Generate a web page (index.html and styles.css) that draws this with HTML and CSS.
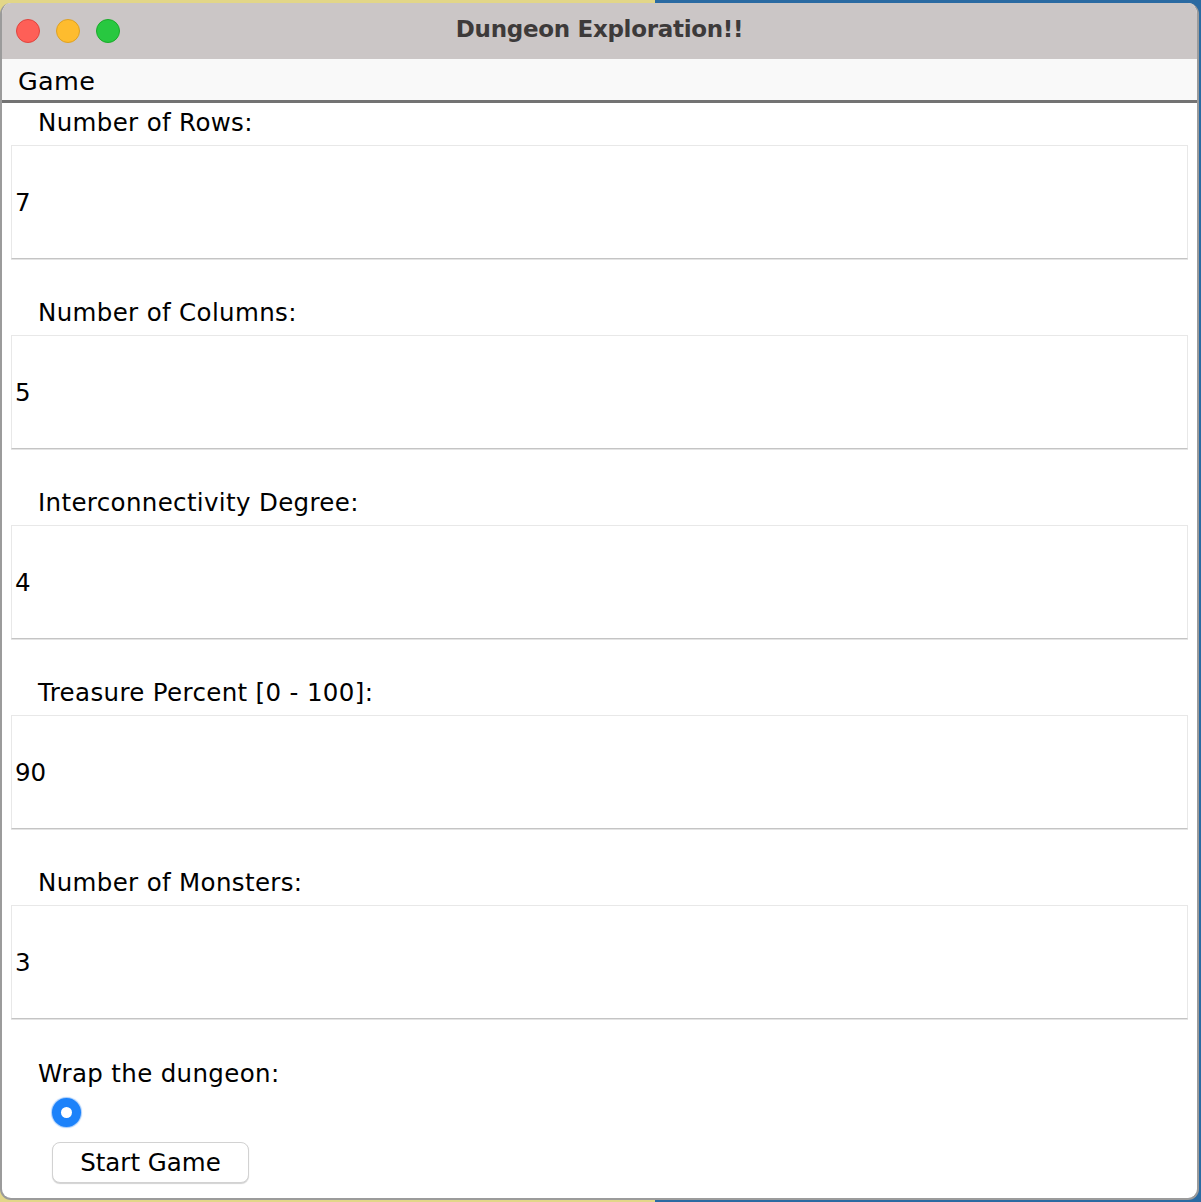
FILE: index.html
```html
<!DOCTYPE html>
<html>
<head>
<meta charset="utf-8">
<link rel="stylesheet" href="styles.css">
</head>
<body>
<div class="window">
  <div class="titlebar">
    <div class="lights">
      <span class="light red"></span>
      <span class="light yellow"></span>
      <span class="light green"></span>
    </div>
    <div class="title">Dungeon Exploration!!</div>
  </div>
  <div class="menubar"><span class="menu">Game</span></div>
  <div class="content">
    <div class="label first">Number of Rows:</div>
    <div class="field">7</div>
    <div class="label">Number of Columns:</div>
    <div class="field">5</div>
    <div class="label">Interconnectivity Degree:</div>
    <div class="field">4</div>
    <div class="label">Treasure Percent [0 - 100]:</div>
    <div class="field">90</div>
    <div class="label">Number of Monsters:</div>
    <div class="field">3</div>
    <div class="label wrap">Wrap the dungeon:</div>
    <div class="radio-row"><span class="radio"></span></div>
    <button class="start">Start Game</button>
  </div>
</div>
</body>
</html>
```
FILE: styles.css
```css
html, body {
  margin: 0;
  padding: 0;
}
body {
  width: 1201px;
  height: 1202px;
  background: linear-gradient(to right, #e2d688 0, #e2d688 655px, #2a6aa2 655px, #2a6aa2 100%);
  font-family: "DejaVu Sans", sans-serif;
  overflow: hidden;
}
.window {
  margin-top: 3px;
  width: 1199px;
  height: 1197px;
  box-sizing: border-box;
  border-radius: 11px;
  border: 2px solid #9b9b9b;
  border-top: none;
  background: #ffffff;
  overflow: hidden;
  display: flex;
  flex-direction: column;
}
.titlebar {
  height: 56px;
  background: #cbc6c6;
  display: flex;
  align-items: center;
  position: relative;
  flex: none;
}
.lights {
  display: flex;
  gap: 16px;
  padding-left: 14px;
}
.light {
  width: 24px;
  height: 24px;
  border-radius: 50%;
  box-sizing: border-box;
}
.red { background: #fe5f57; border: 1px solid #e0443e; }
.yellow { background: #febc2e; border: 1px solid #dea123; }
.green { background: #28c840; border: 1px solid #1aab29; }
.title {
  position: absolute;
  left: 0;
  right: 0;
  top: 0;
  line-height: 53px;
  text-align: center;
  font-weight: bold;
  font-size: 23px;
  color: #3d3a3a;
  letter-spacing: -0.3px;
}
.menubar {
  height: 41px;
  background: #f9f9f9;
  border-bottom: 3px solid #737373;
  display: flex;
  align-items: center;
  flex: none;
}
.menu {
  padding-left: 16px;
  padding-top: 2px;
  font-size: 25.5px;
  letter-spacing: 0.3px;
  color: #000;
}
.content {
  padding: 0 9px 0 9px;
  display: flex;
  flex-direction: column;
  align-items: stretch;
}
.label {
  height: 42px;
  line-height: 40px;
  padding-left: 27px;
  font-size: 24.5px;
  letter-spacing: 0.35px;
  color: #000;
  margin-top: 34px;
}
.label.first {
  margin-top: 0;
}
.label.wrap {
  margin-top: 35px;
}
.field {
  height: 114px;
  box-sizing: border-box;
  border: 1px solid #e8e8e8;
  border-bottom: 1px solid #c4c4c4;
  box-shadow: 0 1px 0 #e4e4e4;
  display: flex;
  align-items: center;
  padding-left: 3px;
  font-size: 24.5px;
  color: #000;
}
.radio-row {
  height: 32px;
  display: flex;
  align-items: center;
  padding-left: 41px;
}
.radio {
  width: 29px;
  height: 29px;
  border-radius: 50%;
  box-sizing: border-box;
  background: #1c82fa;
  border: 9px solid #1c82fa;
  box-shadow: 0 0 1px 1px rgba(90, 160, 250, 0.55);
  position: relative;
}
.radio::after {
  content: "";
  position: absolute;
  left: 0;
  top: 0;
  width: 11px;
  height: 11px;
  border-radius: 50%;
  background: #ffffff;
}
.start {
  align-self: flex-start;
  margin-left: 41px;
  margin-top: 14px;
  width: 197px;
  height: 41px;
  border: 1px solid #d2d2d2;
  border-radius: 8px;
  background: #ffffff;
  box-shadow: 0 1px 1px rgba(0, 0, 0, 0.18);
  font-family: "DejaVu Sans", sans-serif;
  font-size: 24.5px;
  color: #000;
  padding: 0;
}
```
